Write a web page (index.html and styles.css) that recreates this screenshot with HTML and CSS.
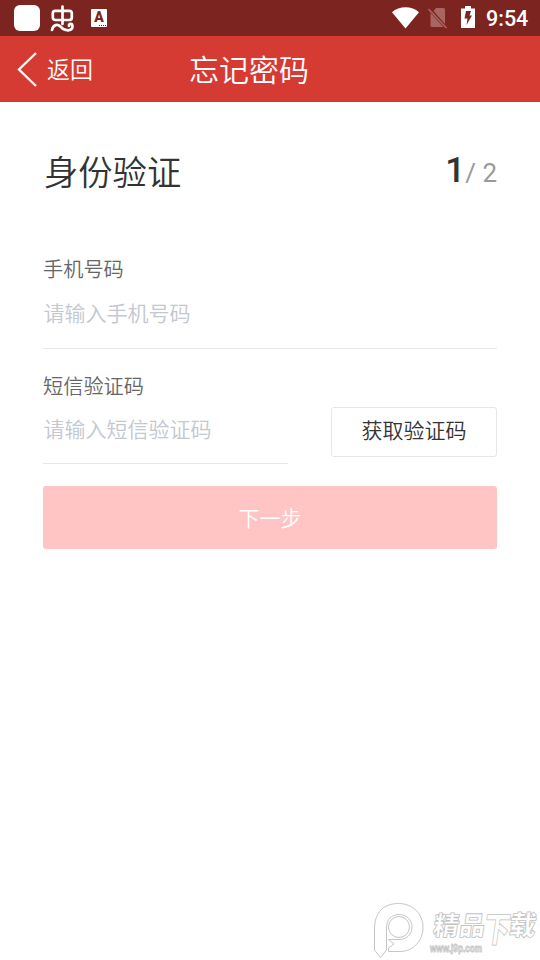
FILE: index.html
```html
<!DOCTYPE html>
<html lang="zh-CN">
<head>
<meta charset="utf-8">
<title>忘记密码</title>
<link rel="stylesheet" href="styles.css">
</head>
<body>
<div class="status">
  <div class="status-left">
    <span class="app-dot"></span>
    <svg class="bug" width="28" height="28" viewBox="0 0 28 28" fill="none" stroke="#fff" stroke-width="2.700" stroke-linecap="round" stroke-linejoin="round"><path d="M13.500 2.500V20"/><rect x="3.800" y="6.800" width="19" height="9.200" rx="2.500"/><path d="M3 26C4 20.500 9 19.500 12 23C15 27 23.500 28 23.500 22.500C23.500 19 19.500 19 20 22"/></svg>
    <span class="lang">A<i></i></span>
  </div>
  <div class="status-right">
    <svg width="27" height="22" viewBox="0 0 27 22"><path fill="#fff" d="M0 5.200C7-1.500 20-1.500 27 5.200L13.500 21.500Z"/></svg>
    <svg class="sim" width="20" height="22" viewBox="0 0 20 22"><path fill="#a96561" d="M8 1H15.500Q17 1 17 2.500V17L5.500 4ZM2.500 6L15.500 20H4Q2.500 20 2.500 18.500Z"/><path d="M.5 2L18.500 21" stroke="#a96561" stroke-width="1.600"/></svg>
    <svg class="battery" width="14" height="22" viewBox="0 0 14 22"><path fill="#fff" d="M4 0H10V2.500H14V22H0V2.500H4Z"/><path fill="#7c241f" d="M5 5H10L8.500 9.500H11L5.500 19L6.500 12.500H3.500Z"/></svg>
    <span class="time">9:54</span>
  </div>
</div>
<header class="nav">
  <svg class="chevron" width="20" height="36" viewBox="0 0 20 36"><path d="M19 2L2 18.500L19 35" fill="none" stroke="#fff" stroke-width="2.300"/></svg>
  <span class="back">返回</span>
  <h1>忘记密码</h1>
</header>
<main>
  <div class="heading"><h2>身份验证</h2><div class="step"><b>1</b>/ 2</div></div>
  <div class="field phone"><label>手机号码</label><div class="placeholder">请输入手机号码</div></div>
  <div class="sms-row">
    <div class="field sms"><label>短信验证码</label><div class="placeholder">请输入短信验证码</div></div>
    <button class="code">获取验证码</button>
  </div>
  <button class="next">下一步</button>
</main>
<svg class="watermark" width="170" height="64" viewBox="0 0 170 64">
  <g fill="#fff" stroke="#c6c6c6" stroke-width="1">
    <path d="M4.500 54V33C4.500 16 14 7.500 28.500 7.500C43 7.500 53 18 53 31.500C53 45 43 55.500 30 55.500H18.500V52L24 48L18.500 43.500H29C37 43.500 42 38 42 31C42 24 36.500 18.500 29 18.500C21 18.500 16.500 24 16.500 32V54L10.500 61.500Z"/>
    <circle cx="29" cy="31" r="10.500"/>
  </g>
  <g class="wm-text"><text class="wm-name" transform="translate(62 40) skewX(-8)"><tspan x="0" y="-1" font-size="26" textLength="52" lengthAdjust="spacingAndGlyphs">精品</tspan><tspan x="51" y="6" font-size="35" textLength="26" lengthAdjust="spacingAndGlyphs">下</tspan><tspan x="76" y="-1" font-size="27" textLength="27" lengthAdjust="spacingAndGlyphs">载</tspan></text>
  <text class="wm-url" x="60" y="56" textLength="52" lengthAdjust="spacingAndGlyphs">www.j9p.com</text></g>
</svg>
</body>
</html>
```
FILE: styles.css
```css
* { box-sizing: border-box; }
body { margin: 0; height: 960px; overflow: hidden; background: #fff; color: #333; font-family: Roboto, "Noto Sans CJK SC", sans-serif; font-weight: 350; position: relative; }
h1, h2 { margin: 0; font-weight: inherit; }
svg { display: block; flex: none; }
.status { height: 36px; background: #7c241f; display: flex; justify-content: space-between; color: #fff; }
.status-left, .status-right { display: flex; align-items: center; }
.status-left { padding-left: 14px; }
.app-dot { width: 26px; height: 26px; border-radius: 6px; background: #fff; }
.bug { margin-left: 9px; }
.lang { width: 16px; height: 18px; margin-left: 14px; background: #fff; color: #7c241f; font: 900 14px/17px Roboto, sans-serif; text-align: center; border-radius: 1px; position: relative; }
.lang i { position: absolute; right: 1px; bottom: 1px; width: 7px; border-bottom: 1px dotted #7c241f; }
.status-right { padding-right: 12px; }
.sim { margin-left: 9px; }
.battery { margin-left: 13px; margin-bottom: 2px; }
.time { width: 42px; margin-left: 11px; font-size: 21.5px; font-weight: 500; line-height: 36px; padding-top: 1px; white-space: nowrap; }
.nav { height: 66px; background: #d53b33; color: #fff; display: flex; align-items: center; padding-left: 17px; }
.back { width: 144px; padding-left: 10px; font-size: 23px; line-height: 69px; height: 66px; }
.nav h1 { margin-left: 8px; font-size: 30px; line-height: 70px; height: 66px; }
main { padding: 44px 43px 0; }
.heading { display: flex; justify-content: space-between; height: 50px; }
h2 { font-size: 34.3px; line-height: 54px; padding-left: 1px; }
.step { font-size: 26px; font-weight: 400; color: #999; line-height: 54px; }
.step b { color: #333; font-size: 35px; font-weight: 500; line-height: 48px; }
.field { border-bottom: 1px solid #e7e7e7; }
label { display: block; height: 30px; font-size: 20.2px; line-height: 34px; color: #666; }
.placeholder { font-size: 21px; line-height: 32px; color: #c3c7d0; padding-left: .4px; }
.phone { height: 96px; margin-top: 57px; }
.phone .placeholder { margin-top: 15px; }
.sms-row { display: flex; justify-content: space-between; margin-top: 21px; }
.sms { width: 245px; height: 94px; }
.sms .placeholder { margin-top: 14px; }
button { font-family: inherit; font-weight: inherit; font-size: 21px; padding: 0; }
.code { width: 166px; height: 50px; margin-top: 37px; padding-bottom: 7px; border: 1px solid #e7e7e7; border-radius: 3px; background: #fff; color: #333; }
.next { display: block; width: 100%; height: 63px; margin-top: 22px; padding-bottom: 2px; border: 0; border-radius: 3px; background: #ffc4c4; color: #fff; }
.watermark { position: absolute; right: 0; bottom: 0; }
.wm-text { fill: #fff; stroke: #c2c2c2; stroke-width: .8px; stroke-linejoin: round; }
.wm-name { font-family: "Noto Sans CJK SC", sans-serif; font-weight: 900; }
.wm-url { font: 700 10px "Liberation Sans", sans-serif; }
```
